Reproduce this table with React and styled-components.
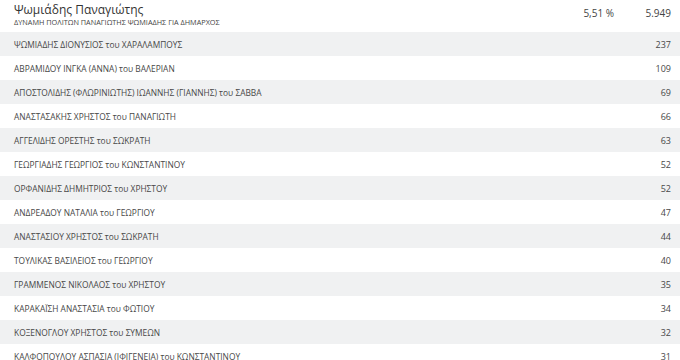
import React from "react";
import styled, { createGlobalStyle } from "styled-components";

const Global = createGlobalStyle`
  html, body { margin: 0; padding: 0; background: #fff; }
  body { font-family: "Open Sans", "Liberation Sans", sans-serif; color: #444; }
`;

const Page = styled.div`
  width: 680px;
  display: flex;
  flex-direction: column;
`;

const Header = styled.div`
  height: 32px;
  box-sizing: border-box;
  display: grid;
  grid-template-columns: 1fr 80px 57px;
  padding: 2px 9px 0 14px;
`;

const NameBlock = styled.div`
  display: flex;
  flex-direction: column;
`;

const Name = styled.div`
  font-size: 12px;
  line-height: 15px;
  color: #333;
`;

const Party = styled.div`
  font-size: 7.3px;
  line-height: 10px;
  color: #444;
`;

const HeaderNum = styled.div`
  font-size: 10px;
  line-height: 22px;
  text-align: right;
  color: #444;
`;

const Row = styled.div`
  height: 24px;
  display: flex;
  align-items: center;
  justify-content: space-between;
  padding: 0 9px 0 14px;
  background: ${(p) => (p.$shaded ? "#f0f1f2" : "#fff")};
  font-size: 8.4px;
  color: #484848;
`;

const Cand = styled.span``;
const Votes = styled.span`
  font-size: 9px;
`;

const rows = [
  ["ΨΩΜΙΑΔΗΣ ΔΙΟΝΥΣΙΟΣ του ΧΑΡΑΛΑΜΠΟΥΣ", 237],
  ["ΑΒΡΑΜΙΔΟΥ ΙΝΓΚΑ (ΑΝΝΑ) του ΒΑΛΕΡΙΑΝ", 109],
  ["ΑΠΟΣΤΟΛΙΔΗΣ (ΦΛΩΡΙΝΙΩΤΗΣ) ΙΩΑΝΝΗΣ (ΓΙΑΝΝΗΣ) του ΣΑΒΒΑ", 69],
  ["ΑΝΑΣΤΑΣΑΚΗΣ ΧΡΗΣΤΟΣ του ΠΑΝΑΓΙΩΤΗ", 66],
  ["ΑΓΓΕΛΙΔΗΣ ΟΡΕΣΤΗΣ του ΣΩΚΡΑΤΗ", 63],
  ["ΓΕΩΡΓΙΑΔΗΣ ΓΕΩΡΓΙΟΣ του ΚΩΝΣΤΑΝΤΙΝΟΥ", 52],
  ["ΟΡΦΑΝΙΔΗΣ ΔΗΜΗΤΡΙΟΣ του ΧΡΗΣΤΟΥ", 52],
  ["ΑΝΔΡΕΑΔΟΥ ΝΑΤΑΛΙΑ του ΓΕΩΡΓΙΟΥ", 47],
  ["ΑΝΑΣΤΑΣΙΟΥ ΧΡΗΣΤΟΣ του ΣΩΚΡΑΤΗ", 44],
  ["ΤΟΥΛΙΚΑΣ ΒΑΣΙΛΕΙΟΣ του ΓΕΩΡΓΙΟΥ", 40],
  ["ΓΡΑΜΜΕΝΟΣ ΝΙΚΟΛΑΟΣ του ΧΡΗΣΤΟΥ", 35],
  ["ΚΑΡΑΚΑΪΣΗ ΑΝΑΣΤΑΣΙΑ του ΦΩΤΙΟΥ", 34],
  ["ΚΟΞΕΝΟΓΛΟΥ ΧΡΗΣΤΟΣ του ΣΥΜΕΩΝ", 32],
  ["ΚΑΛΦΟΠΟΥΛΟΥ ΑΣΠΑΣΙΑ (ΙΦΙΓΕΝΕΙΑ) του ΚΩΝΣΤΑΝΤΙΝΟΥ", 31],
];

export default function App() {
  return (
    <>
      <Global />
      <Page>
        <Header>
          <NameBlock>
            <Name>Ψωμιάδης Παναγιώτης</Name>
            <Party>ΔΥΝΑΜΗ ΠΟΛΙΤΩΝ ΠΑΝΑΓΙΩΤΗΣ ΨΩΜΙΑΔΗΣ ΓΙΑ ΔΗΜΑΡΧΟΣ</Party>
          </NameBlock>
          <HeaderNum>5,51 %</HeaderNum>
          <HeaderNum>5.949</HeaderNum>
        </Header>
        {rows.map(([n, v], i) => (
          <Row key={n} $shaded={i % 2 === 0}>
            <Cand>{n}</Cand>
            <Votes>{v}</Votes>
          </Row>
        ))}
      </Page>
    </>
  );
}
